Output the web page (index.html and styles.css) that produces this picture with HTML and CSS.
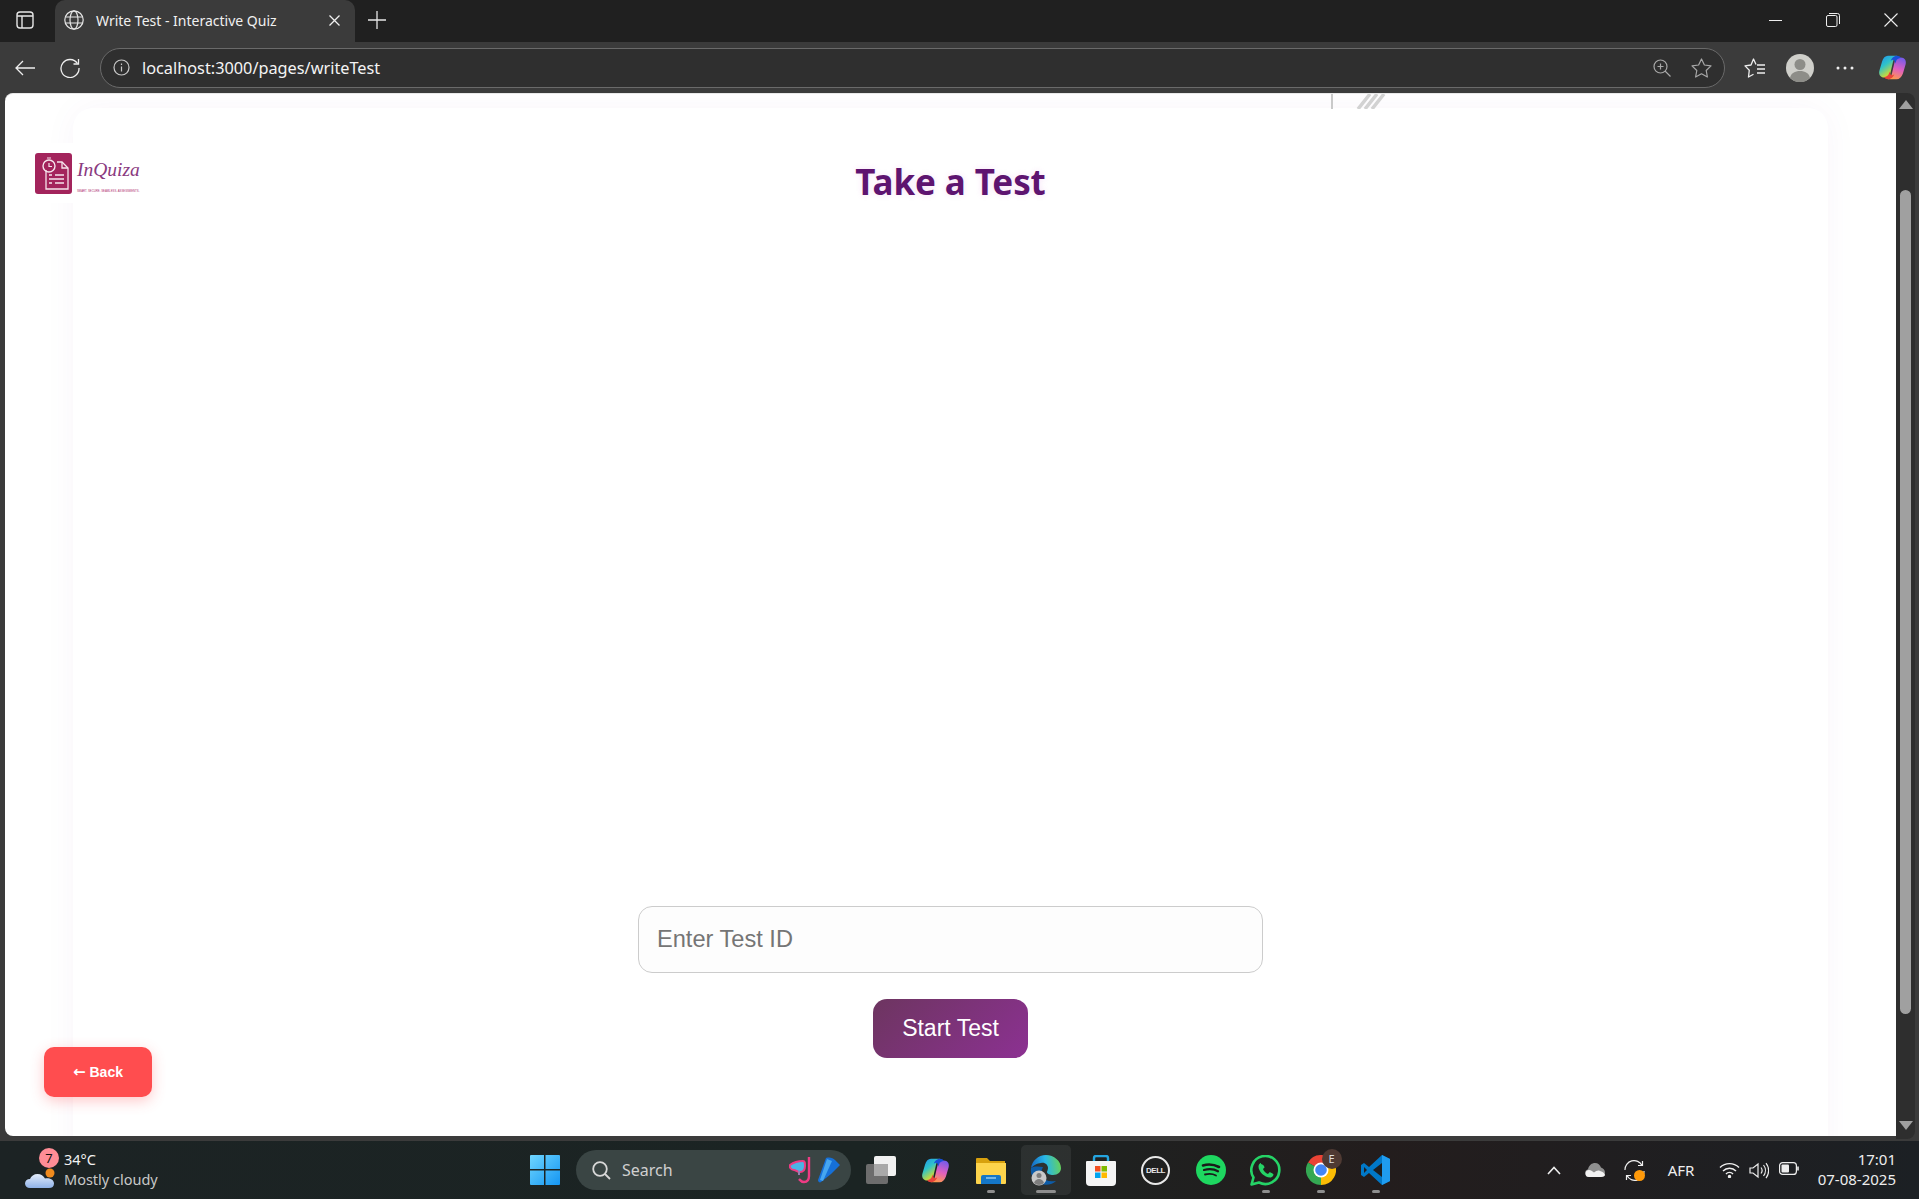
FILE: index.html
```html
<!DOCTYPE html>
<html>
<head>
    <title>Write Test - Interactive Quiz</title>
    <link rel="stylesheet" href="styles.css">
</head>
<body>
    <svg class="defs" width="0" height="0">
        <defs>
            <linearGradient id="copA" x1="0" y1="0" x2="0.6" y2="1">
                <stop offset="0" stop-color="#1f8ef1"/>
                <stop offset="0.45" stop-color="#2fc3c9"/>
                <stop offset="0.8" stop-color="#b6d64a"/>
                <stop offset="1" stop-color="#f5c83a"/>
            </linearGradient>
            <linearGradient id="copB" x1="0.6" y1="0" x2="0.3" y2="1">
                <stop offset="0" stop-color="#7a5be8"/>
                <stop offset="0.5" stop-color="#e05fc0"/>
                <stop offset="1" stop-color="#ff9a4a"/>
            </linearGradient>
            <symbol id="copilot" viewBox="0 0 32 32">
                <path d="M11 3h10c-2.500 1-3.500 3-4.500 7l-3 13c-.6 2.500-3.500 4-6.500 4-4.500 0-6.500-3.500-5.500-7.500l3-10C5.500 5.500 8 3 11 3z" fill="url(#copA)"/>
                <path d="M21 29H11c2.500-1 3.500-3 4.500-7l3-13c.6-2.500 3.500-4 6.500-4 4.500 0 6.500 3.500 5.500 7.500l-3 10c-1.500 4-4 6.500-7 6.500z" fill="url(#copB)"/>
                <path d="M11 3h10c2 0 3.500 1 4 2.500-2 .2-4.500 1.300-5 3.500l-.6 2.500C18.500 8 17 6 14 8.500 15 5.500 17 4 20 3z" fill="#1a4fd8"/>
                <path d="M21 29H11c-2 0-3.500-1-4-2.500 2-.2 4.500-1.300 5-3.500l.6-2.500c.9 3.500 2.400 5.500 5.400 3-1 3-3 4.500-6 5.500z" fill="#e8443a"/>
            </symbol>
        </defs>
    </svg>

    <div class="tabstrip">
        <div class="strip-btn">
            <svg width="18" height="18" viewBox="0 0 18 18" fill="none" stroke="#e6e6e6" stroke-width="1.400"><rect x="1" y="1" width="16" height="16" rx="3"/><path d="M1 5h16M6 5v12"/></svg>
        </div>
        <div class="tab">
            <svg width="20" height="20" viewBox="0 0 20 20" fill="none" stroke="#e6e6e6" stroke-width="1.200"><circle cx="10" cy="10" r="9.200"/><ellipse cx="10" cy="10" rx="4" ry="9.200"/><path d="M1.500 7h17M1.500 13h17"/></svg>
            <span class="tab-title">Write Test - Interactive Quiz</span>
            <svg class="tab-close" width="11" height="11" viewBox="0 0 11 11" stroke="#f0f0f0" stroke-width="1.300"><path d="M.5.500l10 10M10.500.500l-10 10"/></svg>
        </div>
        <div class="new-tab">
            <svg width="18" height="18" viewBox="0 0 18 18" stroke="#e6e6e6" stroke-width="1.300"><path d="M9 0v18M0 9h18"/></svg>
        </div>
        <div class="win-controls">
            <div class="win-btn"><svg width="13" height="13" viewBox="0 0 13 13" stroke="#eee" stroke-width="1"><path d="M0 6.500h13"/></svg></div>
            <div class="win-btn"><svg width="14" height="14" viewBox="0 0 14 14" fill="none" stroke="#eee" stroke-width="1"><rect x=".5" y="2.500" width="10.500" height="11" rx="1.500"/><path d="M3 .5h8.500a2 2 0 0 1 2 2V11"/></svg></div>
            <div class="win-btn"><svg width="14" height="14" viewBox="0 0 14 14" stroke="#eee" stroke-width="1.100"><path d="M.5.500l13 13M13.500.500l-13 13"/></svg></div>
        </div>
    </div>

    <div class="toolbar">
        <div class="tool-btn">
            <svg width="20" height="16" viewBox="0 0 20 16" fill="none" stroke="#eee" stroke-width="1.300"><path d="M20 8H1M8 1L1 8l7 7"/></svg>
        </div>
        <div class="tool-btn">
            <svg width="20" height="20" viewBox="0 0 20 20" fill="none" stroke="#eee" stroke-width="1.300"><path d="M17.500 5.500A9 9 0 1 0 19 10"/><path d="M18.500 1v5h-5"/></svg>
        </div>
        <div class="address">
            <svg width="17" height="17" viewBox="0 0 17 17" fill="none" stroke="#c8c8c8" stroke-width="1.200"><circle cx="8.500" cy="8.500" r="7.500"/><path d="M8.500 7.500v5M8.500 4.500v1.500"/></svg>
            <span class="url">localhost:3000/pages/writeTest</span>
            <svg class="addr-zoom" width="18" height="18" viewBox="0 0 18 18" fill="none" stroke="#a8a8a8" stroke-width="1.200"><circle cx="7.500" cy="7.500" r="6.500"/><path d="M12 12l5.500 5.500M7.500 4.500v6M4.500 7.500h6"/></svg>
            <svg class="addr-star" width="21" height="20" viewBox="0 0 21 20" fill="none" stroke="#a8a8a8" stroke-width="1.200"><path d="M10.500 1l2.900 6 6.600.9-4.800 4.600 1.200 6.500-5.900-3.200L4.600 19l1.200-6.500L1 7.900 7.600 7z" stroke-linejoin="round"/></svg>
        </div>
        <div class="tool-right">
            <div class="tool-btn">
                <svg width="21" height="20" viewBox="0 0 21 20" fill="none" stroke="#eee" stroke-width="1.300"><path d="M12 6.500L9.500 1 7 7l-6 .9 4.300 4.300L4.500 19l5-2.800" stroke-linejoin="round"/><path d="M13 7h8M13 11h8M13 15h8"/></svg>
            </div>
            <div class="tool-btn">
                <svg width="28" height="28" viewBox="0 0 28 28"><circle cx="14" cy="14" r="14" fill="#cfcfca"/><circle cx="14" cy="10.500" r="5.500" fill="#8d8d88"/><path d="M4 24c1-5 5-7 10-7s9 2 10 7a14 14 0 0 1-20 0z" fill="#8d8d88"/></svg>
            </div>
            <div class="tool-btn">
                <svg width="18" height="4" viewBox="0 0 18 4" fill="#eee"><circle cx="2" cy="2" r="1.500"/><circle cx="9" cy="2" r="1.500"/><circle cx="16" cy="2" r="1.500"/></svg>
            </div>
            <div class="tool-btn copilot-btn">
                <svg width="29" height="29"><use href="#copilot"/></svg>
            </div>
        </div>
    </div>

    <div class="main">
        <div class="page">
            <svg class="page-lines" width="60" height="15" viewBox="0 0 60 15" fill="none">
                <path d="M1 0v15" stroke="#c9c9c9" stroke-width="2"/>
                <path d="M27 15L39 0M34 15L46 0M41 15L53 0" stroke="#d2d2d2" stroke-width="3.500"/>
            </svg>
            <div class="logo">
                <svg width="38" height="42" viewBox="0 0 38 42" fill="none">
                    <rect width="37" height="41" rx="3" fill="#a3245c"/>
                    <path d="M11 17v19h22V15l-6-6H22" stroke="#f6e4ec" stroke-width="1.300"/>
                    <path d="M27 9v6h6" stroke="#f6e4ec" stroke-width="1.300"/>
                    <circle cx="14" cy="13" r="6" stroke="#f6e4ec" stroke-width="1.400"/>
                    <path d="M14 10v3.500h3M12 5h4" stroke="#f6e4ec" stroke-width="1.200"/>
                    <path d="M20 22h9M14 26h15M20 30h9M14 22h3M14 30h3" stroke="#f6e4ec" stroke-width="1.300"/>
                </svg>
                <div class="logo-text">
                    <span class="logo-name">InQuiza</span>
                    <span class="logo-tag">SMART. SECURE. SEAMLESS. ASSESSMENTS.</span>
                </div>
            </div>
            <div class="card">
                <h1 class="heading">Take a Test</h1>
                <input class="test-input" type="text" placeholder="Enter Test ID">
                <button class="start-btn">Start Test</button>
            </div>
            <button class="back-btn"><span class="back-arrow">←</span> Back</button>
        </div>
        <div class="scrollbar">
            <span class="arrow-up"></span>
            <span class="thumb"></span>
            <span class="arrow-down"></span>
        </div>
    </div>

    <div class="taskbar">
        <div class="weather">
            <div class="weather-icon">
                <svg width="34" height="34" viewBox="0 0 34 34">
                    <defs><linearGradient id="cloud" x1="0" y1="0" x2="0" y2="1"><stop offset="0" stop-color="#e3edfb"/><stop offset="1" stop-color="#8fb2e8"/></linearGradient></defs>
                    <circle cx="26" cy="15" r="4.500" fill="#f08a1d"/>
                    <path d="M6 30c-3 0-5-2-5-4.500S3 21 6 21c1-3 4-5 7.500-5s6 2 7.500 4.500c4-.8 9 1 9 5 0 3-2 4.500-5 4.500z" fill="url(#cloud)"/>
                </svg>
                <span class="weather-badge">7</span>
            </div>
            <div class="weather-text">
                <span class="temp">34°C</span>
                <span class="cond">Mostly cloudy</span>
            </div>
        </div>

        <div class="task-center">
            <div class="task-item start-item">
                <svg width="30" height="30" viewBox="0 0 30 30">
                    <defs><linearGradient id="win" x1="0" y1="0" x2="1" y2="1"><stop offset="0" stop-color="#6fd6ff"/><stop offset="1" stop-color="#1495f2"/></linearGradient></defs>
                    <path d="M1 0h13v14H0V1a1 1 0 0 1 1-1zM15.500 0H29a1 1 0 0 1 1 1v13H15.500zM0 15.500h14V30H1a1 1 0 0 1-1-1zM15.500 15.500H30V29a1 1 0 0 1-1 1H15.500z" fill="url(#win)"/>
                </svg>
            </div>
            <div class="search">
                <svg width="19" height="19" viewBox="0 0 19 19" fill="none" stroke="#d8d8d8" stroke-width="1.800"><circle cx="8" cy="8" r="6.800"/><path d="M13 13l5 5"/></svg>
                <span class="search-text">Search</span>
                <svg class="search-art" width="52" height="28" viewBox="0 0 52 28" fill="none">
                    <path d="M1 9c4-3 9-4 13-4 2 0 2 2 2 5 0 4-2 6-5 6-3 0-4-2-6-2-3 0-5-3-4-5z" fill="#4bb4e6" stroke="#ee3b84" stroke-width="2"/>
                    <path d="M20 1v19c0 4-2 6-5 6s-4-2-5-3" stroke="#ee3b84" stroke-width="2.400"/>
                    <path d="M10 15v4" stroke="#9a7db0" stroke-width="2"/>
                    <path d="M37 2c4-1 7 0 9 2l5 5-9 9-10 8c-1 1-3 0-3-2z" fill="#1670d8"/>
                    <path d="M38 3l5 2-9 20-3-1z" fill="#46a6f0"/>
                </svg>
            </div>
            <div class="task-item">
                <svg width="30" height="28" viewBox="0 0 30 28">
                    <rect x="0" y="8" width="22" height="20" rx="2" fill="#6d6d6d"/>
                    <rect x="8" y="0" width="22" height="20" rx="2" fill="#f1f1f1"/>
                    <rect x="8" y="8" width="14" height="12" fill="#a9a9a9"/>
                </svg>
            </div>
            <div class="task-item">
                <svg width="29" height="29"><use href="#copilot"/></svg>
            </div>
            <div class="task-item running">
                <svg width="30" height="28" viewBox="0 0 30 28">
                    <path d="M1 2h10l3 3h15v3H0V3a1 1 0 0 1 1-1z" fill="#d8a10e"/>
                    <path d="M0 7h30v20a1 1 0 0 1-1 1H1a1 1 0 0 1-1-1z" fill="#fdd44c"/>
                    <path d="M5 21a2 2 0 0 1 2-2h16a2 2 0 0 1 2 2v7H5z" fill="#1477c8"/>
                    <path d="M10 22h10" stroke="#a6d8f7" stroke-width="1.300"/>
                </svg>
            </div>
            <div class="task-item running active">
                <svg width="32" height="32" viewBox="0 0 32 32">
                    <defs>
                        <linearGradient id="edgeTop" x1="0" y1="0.6" x2="1" y2="0.5"><stop offset="0" stop-color="#1466c4"/><stop offset="0.5" stop-color="#28b6e8"/><stop offset="1" stop-color="#66d25a"/></linearGradient>
                    </defs>
                    <path d="M1 14C2 7 8 1 16 1c8 0 15 6 15 13 0 4-3 7-8 7-3 0-6-1-6-3 0-1 1-2 1-4 0-3-3-6-7-5-4 0-8 3-10 5z" fill="url(#edgeTop)"/>
                    <path d="M1 14c-1 7 3 14 10 16 6 2 12 0 15-3-6 1-11 0-13-4-2-3-2-7 0-10-4-.5-9-1-12 1z" fill="#0d5ca8"/>
                    <circle cx="9" cy="24" r="7.500" fill="#c9c9c9"/>
                    <circle cx="9" cy="21.500" r="2.500" fill="#7d7d7d"/>
                    <path d="M4 29c1-3 3-4 5-4s4 1 5 4a7.500 7.500 0 0 1-10 0z" fill="#7d7d7d"/>
                </svg>
            </div>
            <div class="task-item">
                <svg width="30" height="31" viewBox="0 0 30 31" fill="none">
                    <path d="M8 7V3a2 2 0 0 1 2-2h10a2 2 0 0 1 2 2v4" stroke="#24a5e0" stroke-width="2.400"/>
                    <path d="M1 6h28a1 1 0 0 1 1 1v20a4 4 0 0 1-4 4H4a4 4 0 0 1-4-4V7a1 1 0 0 1 1-1z" fill="#f5f5f5"/>
                    <rect x="9" y="11" width="5.500" height="5.500" fill="#f25022"/>
                    <rect x="15.500" y="11" width="5.500" height="5.500" fill="#7fba00"/>
                    <rect x="9" y="17.500" width="5.500" height="5.500" fill="#00a4ef"/>
                    <rect x="15.500" y="17.500" width="5.500" height="5.500" fill="#ffb900"/>
                </svg>
            </div>
            <div class="task-item">
                <div class="dell">DELL</div>
            </div>
            <div class="task-item">
                <svg width="30" height="30" viewBox="0 0 30 30" fill="none">
                    <circle cx="15" cy="15" r="15" fill="#1ed760"/>
                    <path d="M7 10.500c5-1.500 11-1 16 1.500" stroke="#1a1a1a" stroke-width="2.600" stroke-linecap="round"/>
                    <path d="M8 15c4-1 10-1 14 1.300" stroke="#1a1a1a" stroke-width="2.200" stroke-linecap="round"/>
                    <path d="M9 19.500c3.500-.8 8-.6 11 1" stroke="#1a1a1a" stroke-width="1.800" stroke-linecap="round"/>
                </svg>
            </div>
            <div class="task-item running">
                <svg width="31" height="31" viewBox="0 0 31 31" fill="none">
                    <path d="M1.500 29.500l2-7A14 14 0 1 1 9 27.500z" stroke="#25d366" stroke-width="2.600" stroke-linejoin="round"/>
                    <path d="M11 8c-1 0-2.500 1.500-2.500 3.500 0 5 6 11 11.500 11 2 0 3.500-1.500 3.500-3 0-.5-3.500-2.500-4-2.200l-1.500 1.700c-2-.5-4.500-3-5-5l1.500-1.500c.3-.6-1.500-3.500-3.500-3.500z" fill="#25d366"/>
                </svg>
            </div>
            <div class="task-item running">
                <div class="chrome-wrap">
                    <svg width="30" height="30" viewBox="0 0 30 30">
                        <path d="M15 15L2 7.500A15 15 0 0 1 28 7.500z" fill="#ea4335"/>
                        <path d="M15 15L28 7.500A15 15 0 0 1 15 30z" fill="#fbbc05"/>
                        <path d="M15 15L15 30A15 15 0 0 1 2 7.500z" fill="#34a853"/>
                        <circle cx="15" cy="15" r="7.500" fill="#fff"/>
                        <circle cx="15" cy="15" r="5.800" fill="#4285f4"/>
                    </svg>
                    <span class="chrome-badge">E</span>
                </div>
            </div>
            <div class="task-item running">
                <svg width="30" height="30" viewBox="0 0 30 30">
                    <path d="M21 0l8 4v22l-8 4-13-12-5 4-3-2V10l3-2 5 4z" fill="#0078c8"/>
                    <path d="M21 0l8 4v22l-8 4z" fill="#1f9cf0"/>
                    <path d="M21 8v14l-9-7z" fill="#1c1f22"/>
                    <path d="M3 12v6l3-3z" fill="#1c1f22"/>
                </svg>
            </div>
        </div>

        <div class="tray">
            <div class="tray-item">
                <svg width="14" height="9" viewBox="0 0 14 9" fill="none" stroke="#eee" stroke-width="1.600"><path d="M1 8l6-6.500L13 8"/></svg>
            </div>
            <div class="tray-item">
                <svg width="21" height="14" viewBox="0 0 21 14"><path d="M5 14a4 4 0 0 1-1-7.800C5 2 8 0 11 0c3 0 5 2 6 4.500 2 .5 4 2.500 4 5 0 2.500-2 4.500-4 4.500z" fill="#8f8f8f"/><path d="M5 14a3.500 3.500 0 0 1 0-7c2 0 3 1 5 2.500 2-1.500 4-2.500 6-1.500 3 .5 5 3 5 4 0 1-2 2-4 2z" fill="#f2f2f2"/></svg>
            </div>
            <div class="tray-item sync">
                <svg width="21" height="21" viewBox="0 0 21 21" fill="none" stroke="#eee" stroke-width="1.200"><path d="M1 10A9 9 0 0 1 18 5.500M18.500 1v4.500H14M20 11a9 9 0 0 1-17 4.500M2.500 20v-4.500H7"/></svg>
                <span class="sync-dot"></span>
            </div>
            <div class="tray-lang">AFR</div>
            <div class="tray-net">
                <div class="tray-small">
                    <svg width="21" height="16" viewBox="0 0 21 16" fill="none" stroke="#eee" stroke-width="1.400"><path d="M1 5.500a13.500 13.500 0 0 1 19 0M4 9a9 9 0 0 1 13 0M7 12a4.500 4.500 0 0 1 7 0"/><circle cx="10.500" cy="14.500" r="1" fill="#eee"/></svg>
                </div>
                <div class="tray-small">
                    <svg width="20" height="17" viewBox="0 0 20 17" fill="none" stroke="#eee" stroke-width="1.200"><path d="M1 6v5h3l5 4V2L4 6z"/><path d="M12 5.500a5 5 0 0 1 0 6M14.500 3a9 9 0 0 1 0 11M17 1a12 12 0 0 1 0 15"/></svg>
                </div>
                <div class="tray-small">
                    <svg width="20" height="13" viewBox="0 0 20 13" fill="none"><rect x=".6" y=".6" width="16.800" height="11.800" rx="3" stroke="#eee" stroke-width="1.200"/><rect x="2.500" y="2.500" width="7.500" height="8" rx="1" fill="#eee"/><path d="M19 4.500v4" stroke="#eee" stroke-width="1.600"/></svg>
                </div>
            </div>
            <div class="clock">
                <span>17:01</span>
                <span>07-08-2025</span>
            </div>
        </div>
    </div>
</body>
</html>
```

FILE: styles.css
```css
* {
    box-sizing: border-box;
}
html, body {
    margin: 0;
    height: 100%;
    overflow: hidden;
}
body {
    display: flex;
    flex-direction: column;
    background-color: #3b3b3b;
    font-family: "Noto Sans", sans-serif;
    color: #eee;
}
.defs {
    display: block;
    flex: none;
}

/* browser tabs */
.tabstrip {
    display: flex;
    align-items: stretch;
    height: 42px;
    flex: none;
    background-color: #202020;
}
.strip-btn {
    width: 55px;
    padding: 0 5px 2px 0;
    display: flex;
    align-items: center;
    justify-content: center;
}
.tab {
    width: 300px;
    display: flex;
    align-items: center;
    background-color: #3b3b3b;
    border-radius: 10px 10px 0 0;
    padding: 0 15px 2px 9px;
}
.tab-title {
    margin-left: 12px;
    font-size: 14px;
    color: #f0f0f0;
    white-space: nowrap;
}
.tab-close {
    margin-left: auto;
}
.new-tab {
    width: 44px;
    padding-bottom: 2px;
    display: flex;
    align-items: center;
    justify-content: center;
}
.win-controls {
    margin-left: auto;
    margin-right: -1px;
    padding-bottom: 2px;
    display: flex;
}
.win-btn {
    width: 58px;
    display: flex;
    align-items: center;
    justify-content: center;
}

/* toolbar */
.toolbar {
    display: flex;
    align-items: center;
    height: 51px;
    flex: none;
    padding-left: 2px;
}
.tool-btn {
    width: 45px;
    height: 40px;
    display: flex;
    align-items: center;
    justify-content: center;
}
.address {
    width: 1625px;
    height: 40px;
    margin-left: 8px;
    display: flex;
    align-items: center;
    padding: 0 12px;
    background-color: #2f2f2f;
    border: 1px solid #6a6a6a;
    border-radius: 20px;
}
.url {
    margin-left: 12px;
    font-size: 16.3px;
    color: #f4f4f4;
}
.addr-zoom {
    margin-left: auto;
}
.addr-star {
    margin-left: 20px;
}
.tool-right {
    display: flex;
    margin-left: 7px;
}
.copilot-btn {
    margin-left: 3px;
}

/* page */
.main {
    flex: 1;
    display: flex;
    min-height: 0;
    padding: 0 4px 0 5px;
}
.page {
    flex: 1;
    position: relative;
    overflow: hidden;
    margin-bottom: 5px;
    padding: 14px 68px 0;
    background-color: #fff;
    border-top: 1px solid #e8e8e8;
    border-radius: 8px 0 0 8px;
}
.page-lines {
    position: absolute;
    left: 1326px;
    top: 0;
}
.card {
    height: 1120px;
    display: flex;
    flex-direction: column;
    align-items: center;
    background-color: #fff;
    border-radius: 20px;
    box-shadow: 0 0 34px rgba(110, 30, 150, 0.045);
}
.heading {
    margin: 49px 0 0;
    font-size: 35px;
    line-height: 50px;
    font-weight: 700;
    letter-spacing: -0.1px;
    color: #5e1470;
    text-shadow: 0 0 6px rgba(200, 60, 200, 0.15);
}
.test-input {
    width: 625px;
    height: 67px;
    margin-top: 699px;
    padding: 0 18px;
    font-family: "Liberation Sans", Arial, sans-serif;
    font-size: 23.6px;
    background-color: #fdfdfd;
    border: 1px solid #ccc;
    border-radius: 14px;
}
.start-btn {
    width: 155px;
    height: 59px;
    margin-top: 26px;
    font-family: "Liberation Sans", Arial, sans-serif;
    font-size: 23px;
    color: #fff;
    background: linear-gradient(135deg, #6d3560, #8c3192);
    border: none;
    border-radius: 14px;
}
.logo {
    position: absolute;
    left: 15px;
    top: 49px;
    width: 140px;
    height: 60px;
    padding: 10px 0 0 15px;
    display: flex;
    gap: 4px;
    background-color: #fff;
    z-index: 1;
}
.logo-text {
    display: flex;
    flex-direction: column;
}
.logo-name {
    margin-top: 3px;
    font-family: "Liberation Serif", serif;
    font-style: italic;
    font-size: 19.5px;
    line-height: 28px;
    color: #8a3a80;
}
.logo-tag {
    margin-top: 5px;
    font-family: "Liberation Sans", sans-serif;
    font-size: 2.8px;
    line-height: 5px;
    white-space: nowrap;
    color: #b03070;
}
.back-btn {
    position: absolute;
    left: 39px;
    bottom: 39px;
    width: 108px;
    height: 50px;
    font-family: "Liberation Sans", Arial, sans-serif;
    font-size: 14px;
    font-weight: 700;
    color: #fff;
    background-color: #ff4d4f;
    border: none;
    border-radius: 10px;
    box-shadow: 0 4px 14px rgba(255, 77, 79, 0.3);
}
.back-arrow {
    font-family: "DejaVu Sans", sans-serif;
    font-size: 15px;
}

/* scrollbar */
.scrollbar {
    width: 19px;
    margin-bottom: 2px;
    display: flex;
    flex-direction: column;
    align-items: center;
    padding: 7px 0 9px;
    background-color: #2e2e2e;
    border-radius: 0 8px 8px 0;
}
.arrow-up, .arrow-down {
    width: 0;
    height: 0;
    border-left: 7px solid transparent;
    border-right: 7px solid transparent;
}
.arrow-up {
    border-bottom: 9px solid #a0a0a0;
}
.arrow-down {
    border-top: 9px solid #a0a0a0;
}
.thumb {
    width: 11px;
    height: 824px;
    margin: 81px 0 auto;
    background-color: #a0a0a0;
    border-radius: 6px;
}

/* taskbar */
.taskbar {
    height: 58px;
    flex: none;
    display: grid;
    grid-template-columns: 1fr auto 1fr;
    background: linear-gradient(90deg, #1c2324 0%, #1b2423 45%, #231d1d 72%, #1c2024 100%);
}
.weather {
    display: flex;
    align-items: center;
    padding-left: 24px;
}
.weather-icon {
    position: relative;
    width: 40px;
    height: 44px;
    display: flex;
    align-items: flex-end;
}
.weather-badge {
    position: absolute;
    left: 15px;
    top: 0;
    width: 20px;
    height: 20px;
    border-radius: 50%;
    background-color: #ff8d96;
    color: #111;
    font-size: 13px;
    line-height: 20px;
    text-align: center;
}
.weather-text {
    display: flex;
    flex-direction: column;
    margin-bottom: 2px;
    font-size: 14.5px;
    line-height: 20px;
}
.temp {
    color: #f2f2f2;
}
.cond {
    color: #c8c8c8;
}
.task-center {
    display: flex;
    align-items: stretch;
}
.task-item {
    position: relative;
    width: 55px;
    display: flex;
    align-items: center;
    justify-content: center;
}
.start-item {
    margin-left: 1px;
}
.task-item.running::after {
    content: "";
    position: absolute;
    left: 50%;
    bottom: 6px;
    width: 8px;
    height: 3px;
    margin-left: -4px;
    border-radius: 2px;
    background-color: #8e8e8e;
}
.task-item.active::before {
    content: "";
    position: absolute;
    left: 3px;
    right: 2px;
    top: 4px;
    bottom: 4px;
    border-radius: 5px;
    background-color: rgba(255, 255, 255, 0.07);
}
.task-item.active::after {
    width: 20px;
    margin-left: -10px;
}
.task-item svg {
    position: relative;
}
.search {
    width: 275px;
    height: 40px;
    margin: 9px 2px 9px 4px;
    display: flex;
    align-items: center;
    padding: 0 10px 0 16px;
    background-color: #3a4544;
    border-radius: 20px;
}
.search-text {
    margin-left: 11px;
    font-size: 16px;
    color: #d0d0d0;
}
.search-art {
    margin-left: auto;
}
.dell {
    width: 29px;
    height: 29px;
    border: 2px solid #e8e8e8;
    border-radius: 50%;
    font-family: "Liberation Sans", sans-serif;
    font-size: 8px;
    font-weight: 700;
    letter-spacing: -0.5px;
    line-height: 25px;
    text-align: center;
    color: #e8e8e8;
}
.chrome-wrap {
    position: relative;
    width: 30px;
    height: 30px;
}
.chrome-badge {
    position: absolute;
    left: 16px;
    top: -6px;
    width: 20px;
    height: 20px;
    border-radius: 50%;
    background-color: #4f3a33;
    color: #ddd;
    font-size: 11px;
    line-height: 20px;
    text-align: center;
}
.tray {
    display: flex;
    justify-content: flex-end;
    align-items: center;
    padding-right: 24px;
}
.tray-item {
    position: relative;
    width: 40px;
    display: flex;
    justify-content: center;
}
.sync-dot {
    position: absolute;
    left: 20px;
    top: 10px;
    width: 11px;
    height: 11px;
    border-radius: 50%;
    background-color: #ff9a0a;
}
.tray-lang {
    width: 54px;
    text-align: center;
    font-size: 15px;
}
.tray-net {
    display: flex;
    margin-left: 6px;
}
.tray-small {
    width: 30px;
    display: flex;
    justify-content: center;
}
.clock {
    width: 92px;
    margin: 0 -1px 2px 0;
    display: flex;
    flex-direction: column;
    align-items: flex-end;
    font-size: 15px;
    line-height: 20px;
}
```
